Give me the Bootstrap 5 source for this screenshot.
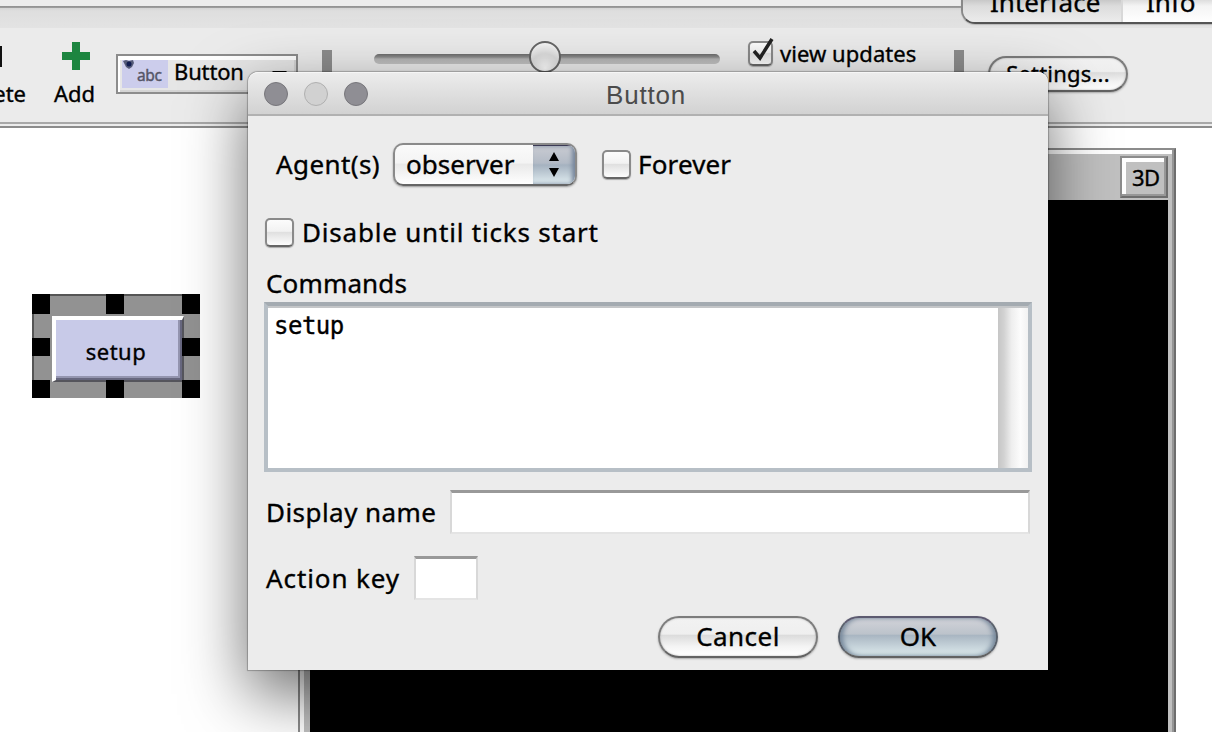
<!DOCTYPE html>
<html lang="en">
<head>
<meta charset="utf-8">
<title>Button</title>
<link href="https://cdn.jsdelivr.net/npm/bootstrap@5.3.0/dist/css/bootstrap.min.css" rel="stylesheet">
<style>
body{font-family:"Noto Sans","Open Sans",sans-serif;color:#000;background:#fff;overflow:hidden}
.app{width:1212px;height:732px;-webkit-text-stroke:.35px}
.t22{font-size:22px;line-height:30px;white-space:nowrap}
.t26{font-size:26px;line-height:32px;white-space:nowrap}
/* top strip with tabs */
.strip{height:28px;background:linear-gradient(#ececec 0 6px,#8f8f8f 6px,#a0a0a0 8px,#d4d4d4 8px,#dedede 11px,#e3e3e3 28px)}
.tabset{left:961px;top:-20px;width:300px;height:44px;border:2px solid #6b6b6b;border-color:#888 #888 #555;border-radius:14px;overflow:hidden;box-shadow:0 1px 1px #bbb}
.tabset>div{padding-top:4px;line-height:32px}
.tab-a{width:158px;padding-left:27px;background:linear-gradient(#c8c8c8 45%,#dcdcdc 60%,#ececec)}
.tab-b{flex:1;padding-left:23px;background:linear-gradient(#ddd 45%,#f4f4f4 60%,#fff);border-left:2px solid #d8d8d8}
/* toolbar */
.tools{height:94px;background:#ebebeb}
.rules{height:6px;background:linear-gradient(#a8a8a8 0 2px,#ececec 2px 4px,#8c8c8c 4px 6px)}
.del{width:26px;height:94px}
.del i{display:block;width:2px;height:21px;background:#111;margin-top:18px}
.del span{position:relative;display:block;margin-top:11px;direction:rtl}
.add{width:44px;margin-left:28px;padding-top:14px}
.combo{width:182px;height:40px;margin:26px 0 0 18px;border:2px solid #8c8c8c;box-shadow:inset 2px 4px #fff,inset -2px -2px #d4d4d4;padding:4px 8px 0 4px;background:#e6e6e6}
.combo .ico{width:46px;height:28px;background:#cccdec}
.sep{width:10px;height:50px;background:#8d8d8d;margin-top:22px}
.track{width:346px;height:10px;margin:26px 0 0 42px;border-radius:5px;background:linear-gradient(#6c6c6c,#8a8a8a 30%,#b4b4b4 50%,#c2c2c2)}
.knob{left:155px;top:-13px;width:32px;height:32px;border-radius:50%;border:2px solid #666;background:radial-gradient(circle at 50% 90%,#fff,#e4e4e4 35%,#dcdcdc 50%,#f8f8f8 90%)}
.box{border:2px solid #8a8a8a;border-bottom-color:#666;border-radius:5px;background:linear-gradient(#fcfcfc,#f2f2f2 45%,#e0e0e0 50%,#fdfdfd);box-shadow:0 1px 1px #aaa}
.pill{border:2px solid #7c7c7c;border-bottom-color:#626262;border-radius:22px;background:linear-gradient(#f2f2f2,#efefef 42%,#dcdcdc 46%,#f4f4f4 75%,#fff);box-shadow:0 1px 2px #aaa,inset 0 0 2px #aaa;text-align:center}
/* widgets on the model canvas */
.canvas{height:604px}
.selbox{left:32px;top:166px;width:168px;height:104px;background:#929292;border:solid #555;border-width:2px 0 0 2px}
.h{width:18px;height:18px;background:#000}
.wbtn{left:18px;top:20px;width:132px;height:66px;background:#c8cae8;border:solid;border-width:4px 2px 2px 4px;border-color:#fff #55555c #55555c #fff;box-shadow:inset -2px -2px #67677f,inset -4px -4px #9495b0;padding-right:6px;text-align:center;line-height:62px;font-size:22px;letter-spacing:.45px}
.view{left:298px;top:20px;width:878px;height:620px;background:#c0c0c0;border:2px solid #8c8c8c;border-right-color:#6e6e6e;box-shadow:inset -2px 0 #969696,inset 4px 4px #fff;padding:50px 6px 0 10px}
.world{height:570px;background:#000}
.b3d{right:6px;top:6px;width:48px;height:42px;border:2px solid #8c8c8c;border-right-color:#6e6e6e;border-bottom-color:#6e6e6e;box-shadow:inset -2px -2px #979797,inset 4px 4px #fff;background:#c0c0c0;font-size:22px;line-height:39px;padding-left:10px;letter-spacing:-.5px}
/* dialog */
.dlg{left:248px;top:72px;width:800px;height:598px;background:#ececec;border-radius:10px 10px 0 0;box-shadow:0 0 1px 1px rgba(0,0,0,.25),0 24px 64px rgba(0,0,0,.58)}
.bar{height:44px;border-radius:10px 10px 0 0;background:linear-gradient(#ececec,#d2d2d2);border-bottom:2px solid #b1b1b1;border-top:1px solid #f6f6f6;color:#4b4b4b;font-family:"Liberation Sans",sans-serif}
.lamp{width:24px;height:24px;border-radius:50%;background:#8f8e94;border:1px solid #77767b}
.lamp.off{background:#d1d1d1;border-color:#b0b0b0}
.pop{width:184px;height:43px;border:2px solid #8a8a8a;border-bottom-color:#666;border-radius:10px;overflow:hidden;box-shadow:0 1px 2px #999;background:linear-gradient(#fafafa,#f4f4f4 45%,#e9e9e9 50%,#fff)}
.pop .arr{width:42px;background:linear-gradient(#c9cbd2,#b3bbc6 45%,#a5b2c0 50%,#e0ecf0);border-top:1px solid #3c3a55;box-shadow:inset -3px 0 4px #75859b}
.ta{width:768px;height:170px;margin:2px 0 0 16px;border:4px solid #b7bfc6;border-top-color:#a4abb1;background:#fff;box-shadow:inset 0 2px #c4c6c8}
.ta pre{font:24px/36px "DejaVu Sans Mono",monospace;letter-spacing:-.5px;margin:0;padding:2px 0 0 6px;overflow:visible;flex:1}
.scr{width:30px;margin-top:2px;background:linear-gradient(90deg,#c6c6c6,#d2d2d2 20%,#eee 45%,#fcfcfc 75%,#f2f2f2)}
.fld{height:44px;background:#fff;border:2px solid #d8d8d8;border-top:3px solid #999;border-bottom-color:#e4e4e4}
.ok{background:linear-gradient(#d2d3d9,#bcc3cb 42%,#a9b6c2 46%,#c6d3da 75%,#dceaec);border-color:#5c5a70 #59616c #626262;box-shadow:0 1px 2px #aaa,inset 4px 0 5px -1px #75879a,inset -4px 0 5px -1px #75879a}
</style>
</head>
<body>
<div class="app position-relative overflow-hidden">
  <header class="strip position-relative">
    <div class="tabset position-absolute d-flex t26 z-1">
      <div class="tab-a">Interface</div>
      <div class="tab-b">Info</div>
    </div>
  </header>
  <div class="tools d-flex align-items-start t22">
    <div class="del"><i></i><span>Delete</span></div>
    <div class="add"><svg class="d-block mx-auto" width="28" height="28"><path d="M10 0h8v10h10v8H18v10h-8V18H0v-8h10z" fill="#1d8540"/></svg><div style="margin-top:8px">Add</div></div>
    <div class="combo d-flex">
      <div class="ico"><svg class="d-block" width="46" height="28"><path d="M1 1l3-1 3 1 4-1 1 3-2 4-3 2-3-2-2-4z" fill="#555b78"/><circle cx="7" cy="4" r="2.5" fill="#111c50"/><text x="15" y="21" font-size="15.5" fill="#555566" stroke="#555566" stroke-width=".4" textLength="25">abc</text></svg></div>
      <div style="margin:-4px 0 0 6px;width:68px;letter-spacing:-.15px">Button</div>
      <svg class="ms-auto" width="16" height="20"><path d="M0 11h15l-7 8z"/></svg>
    </div>
    <div class="sep" style="margin-left:24px"></div>
    <div class="track position-relative"><div class="knob position-absolute"></div></div>
    <div class="box position-relative" style="width:25px;height:25px;margin:13px 0 0 28px"><svg class="position-absolute" style="left:0;top:-6px" width="26" height="26"><path d="M4 14l6 7L22 2" fill="none" stroke="#222" stroke-width="3.5"/></svg></div>
    <div style="margin:10px 0 0 7px;width:138px;letter-spacing:.05px">view updates</div>
    <div class="sep" style="margin-left:36px"></div>
    <div class="pill" style="width:140px;height:36px;margin:28px 0 0 24px;letter-spacing:.2px">Settings...</div>
  </div>
  <div class="rules"></div>
  <main class="canvas position-relative">
    <div class="selbox position-absolute">
      <div class="wbtn position-absolute"><span>setup</span></div>
      <div class="h position-absolute" style="left:-2px;top:-2px;height:20px"></div>
      <div class="h position-absolute" style="left:72px;top:-2px;height:20px"></div>
      <div class="h position-absolute" style="left:148px;top:-2px;height:20px"></div>
      <div class="h position-absolute" style="left:-2px;top:42px"></div>
      <div class="h position-absolute" style="left:148px;top:42px"></div>
      <div class="h position-absolute" style="left:-2px;top:84px"></div>
      <div class="h position-absolute" style="left:72px;top:84px"></div>
      <div class="h position-absolute" style="left:148px;top:84px"></div>
    </div>
    <div class="view position-absolute">
      <div class="b3d position-absolute">3D</div>
      <div class="world"></div>
    </div>
  </main>
  <section class="dlg position-absolute z-2 t26" role="dialog">
    <div class="bar d-flex align-items-center position-relative px-3">
      <div class="d-flex gap-3"><div class="lamp"></div><div class="lamp off"></div><div class="lamp"></div></div>
      <div style="margin-left:238px;padding-top:2px;letter-spacing:.8px;-webkit-text-stroke:0">Button</div>
    </div>
    <div class="d-flex align-items-center" style="height:48px;margin-top:24px;padding-left:28px">
      <div style="width:117px;letter-spacing:.4px">Agent(s)</div>
      <div class="pop d-flex">
        <div class="flex-grow-1" style="padding:3px 0 0 11px;letter-spacing:.05px">observer</div>
        <div class="arr"><svg class="d-block mx-auto" width="12" height="38"><path d="M1 15L6 6l5 9zM1 22h10l-5 9z"/></svg></div>
      </div>
      <div class="box" style="width:29px;height:29px;margin-left:25px"></div>
      <div style="margin-left:7px;letter-spacing:.15px">Forever</div>
    </div>
    <div class="d-flex align-items-center" style="height:32px;margin-top:28px;padding-left:17px">
      <div class="box" style="width:29px;height:29px"></div>
      <div style="margin-left:8px;letter-spacing:.8px">Disable until ticks start</div>
    </div>
    <div style="margin-top:19px;padding:0 0 1px 18px;letter-spacing:.15px">Commands</div>
    <div class="ta d-flex"><pre>setup</pre><div class="scr"></div></div>
    <div class="d-flex align-items-center" style="margin-top:18px;padding-left:18px"><div style="width:184px;letter-spacing:.45px">Display name</div><div class="fld" style="width:580px"></div></div>
    <div class="d-flex align-items-center" style="margin-top:22px;padding-left:18px"><div style="width:148px;letter-spacing:.9px">Action key</div><div class="fld" style="width:64px"></div></div>
    <div class="d-flex justify-content-end" style="gap:20px;margin-top:16px;padding-right:50px;line-height:36px"><div class="pill" style="width:160px;height:42px;letter-spacing:.45px">Cancel</div><div class="pill ok" style="width:160px;height:42px">OK</div></div>
  </section>
</div>
<script src="https://cdn.jsdelivr.net/npm/bootstrap@5.3.0/dist/js/bootstrap.bundle.min.js"></script>
</body>
</html>
